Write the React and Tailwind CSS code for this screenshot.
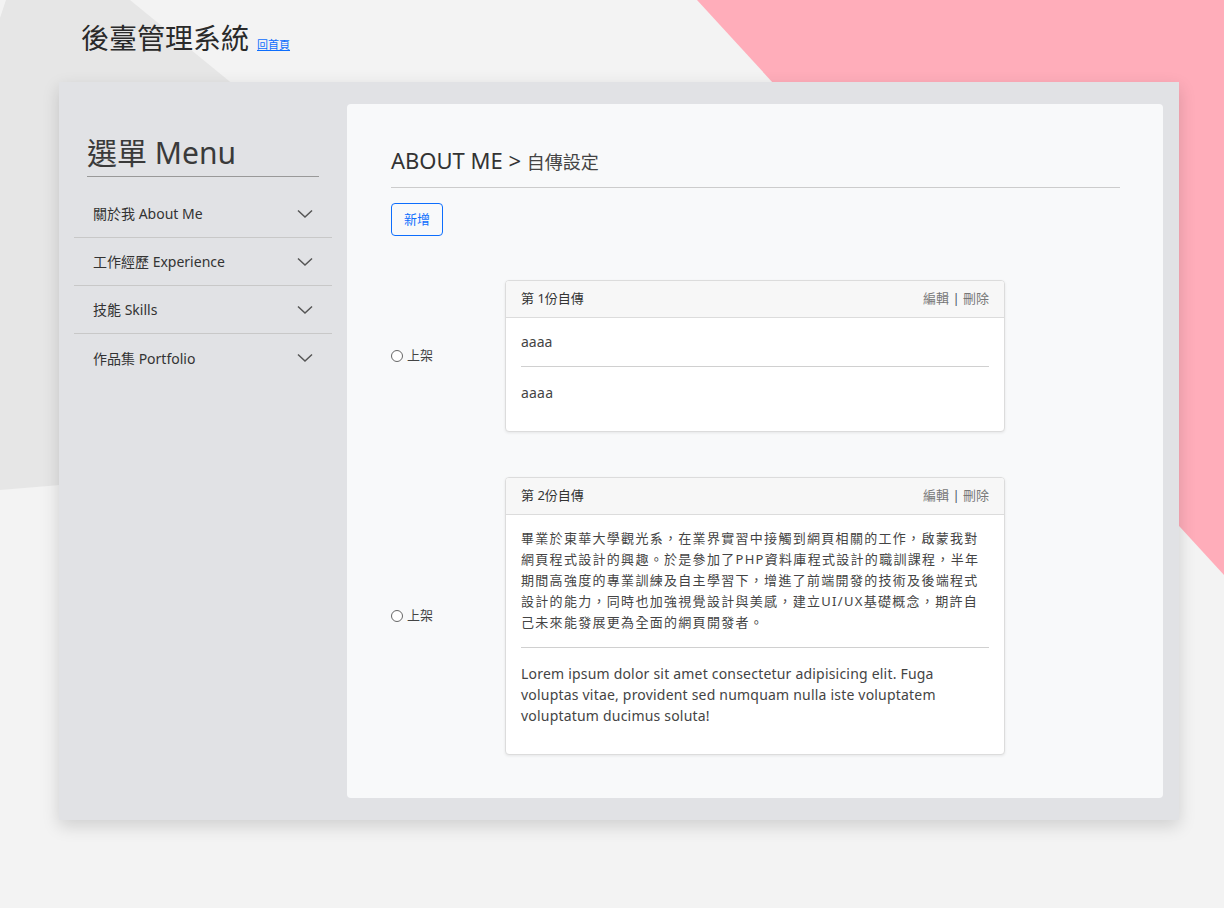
import React from "react";

const menuItems = ["關於我 About Me", "工作經歷 Experience", "技能 Skills", "作品集 Portfolio"];

const bios = [
  {
    id: 1,
    title: "第 1份自傳",
    zh: "aaaa",
    en: "aaaa",
    zhClass: "text-[14px] leading-[21px]",
  },
  {
    id: 2,
    title: "第 2份自傳",
    zh: "畢業於東華大學觀光系，在業界實習中接觸到網頁相關的工作，啟蒙我對網頁程式設計的興趣。於是參加了PHP資料庫程式設計的職訓課程，半年期間高強度的專業訓練及自主學習下，增進了前端開發的技術及後端程式設計的能力，同時也加強視覺設計與美感，建立UI/UX基礎概念，期許自己未來能發展更為全面的網頁開發者。",
    en: "Lorem ipsum dolor sit amet consectetur adipisicing elit. Fuga voluptas vitae, provident sed numquam nulla iste voluptatem voluptatum ducimus soluta!",
    zhClass: "text-[13px] leading-[21px] tracking-[1.3px]",
  },
];

function Chevron() {
  return (
    <svg width="16" height="10" viewBox="0 0 16 10" fill="none">
      <polyline points="1,1.5 8,8 15,1.5" stroke="#555" strokeWidth="1.5" />
    </svg>
  );
}

function BioCard({ bio }) {
  return (
    <div className="flex items-center">
      <label className="w-[115px] flex items-center gap-[4px] text-[13px] text-[#444]">
        <span className="w-[12px] h-[12px] rounded-full border border-[#666] bg-white" />
        上架
      </label>
      <div className="-ml-px w-[500px] bg-white border border-[#dcdcdc] rounded-[4px] shadow-[0_1px_3px_rgba(0,0,0,0.08)] overflow-hidden">
        <div className="h-[37px] bg-[#f7f7f7] border-b border-[#dcdcdc] px-[15px] flex items-center justify-between text-[13px]">
          <span className="text-[#333]">{bio.title}</span>
          <span className="text-[#777]">
            編輯 <span className="text-[#4a5568]">|</span> 刪除
          </span>
        </div>
        <div className="px-[15px] pt-[13px] pb-[28px] text-[#444]">
          <p className={bio.zhClass}>{bio.zh}</p>
          <div className="mt-[14px] mb-[15px] border-t border-[#d0d0d0]" />
          <p className="text-[14px] leading-[21px] tracking-[0.2px]">{bio.en}</p>
        </div>
      </div>
    </div>
  );
}

export default function App() {
  return (
    <div
      className="relative min-h-screen overflow-hidden bg-[#f3f3f3] text-[#333]"
      style={{ fontFamily: '"Noto Sans", "Noto Sans CJK TC", sans-serif' }}
    >
      {/* 背景色塊 */}
      <svg className="absolute inset-0" width="1224" height="908" viewBox="0 0 1224 908">
        <polygon points="0,18 6,0 130,0 662,435 0,490" fill="#e6e6e6" />
        <polygon points="697,0 1224,0 1224,575" fill="#ffadba" />
      </svg>

      <div className="relative">
        <header className="h-[82px] pl-[81px] pb-[6px] flex items-center">
          <div className="flex items-baseline gap-[8px]">
            <h1 className="text-[28px] text-[#2a2a2a]">後臺管理系統</h1>
            <a href="#" className="text-[11px] text-[#0d6efd] underline">
              回首頁
            </a>
          </div>
        </header>

        <div className="ml-[59px] w-[1120px] h-[738px] flex bg-[#e1e2e5] shadow-[0_6px_16px_rgba(0,0,0,0.15)]">
          <aside className="w-[288px] pt-[53px]">
            <h2 className="mx-[28px] text-[30px] leading-[36px] pb-[5px] border-b border-[#999] text-[#3a3a3a]">
              選單 Menu
            </h2>
            <ul className="mx-[15px] mt-[13px]">
              {menuItems.map((item, i) => (
                <li
                  key={item}
                  className={`h-[48px] px-[19px] flex items-center justify-between text-[14px] text-[#333] ${
                    i < menuItems.length - 1 ? "border-b border-[#c8c8c8]" : ""
                  }`}
                >
                  <span>{item}</span>
                  <Chevron />
                </li>
              ))}
            </ul>
          </aside>

          <main className="flex-1 mt-[22px] mb-[22px] mr-[16px] bg-[#f8f9fa] rounded-[4px] pl-[44px] pr-[43px] pt-[40px]">
            <div className="h-[44px] border-b border-[#ccc] flex items-start">
              <h3 className="leading-[32px] text-[#333]">
                <span className="text-[22px]">ABOUT ME &gt; </span>
                <span className="text-[18px] text-[#444]">自傳設定</span>
              </h3>
            </div>
            <button className="block mt-[15px] w-[52px] h-[33px] border border-[#0d6efd] rounded-[4px] text-[13px] text-[#0d6efd] bg-transparent">
              新增
            </button>
            <div className="mt-[44px] flex flex-col gap-[45px]">
              {bios.map((bio) => (
                <BioCard key={bio.id} bio={bio} />
              ))}
            </div>
          </main>
        </div>
      </div>
    </div>
  );
}
